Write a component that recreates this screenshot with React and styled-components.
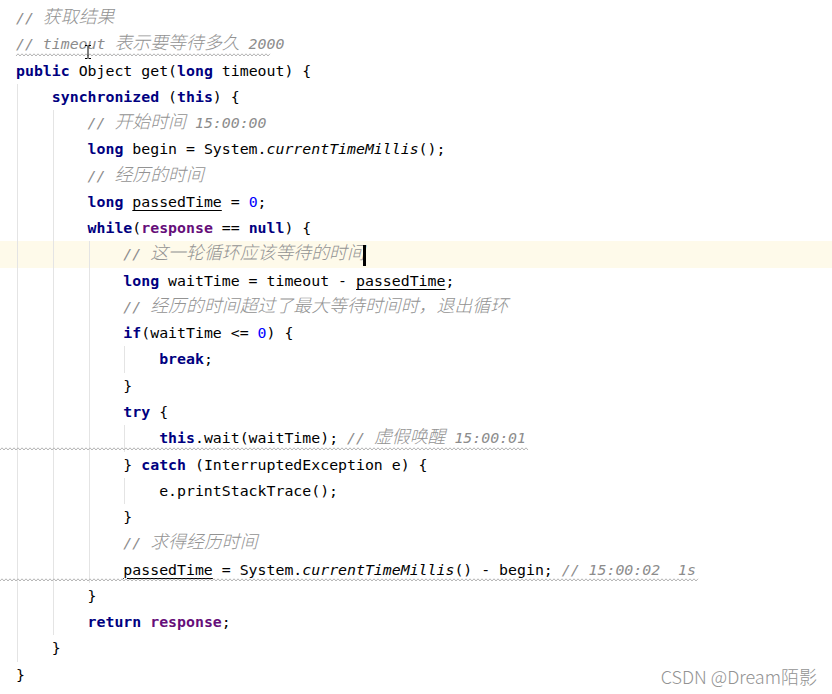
import React from "react";
import styled, { createGlobalStyle } from "styled-components";

const Global = createGlobalStyle`
  html, body { margin: 0; padding: 0; background: #ffffff; }
  #root { width: 832px; height: 694px; }
`;

const LINE_H = 26.28;
const GUIDE_X = [17, 53, 89, 124];

const Page = styled.div`
  position: relative;
  width: 832px;
  height: 694px;
  box-sizing: border-box;
  padding-top: 5px;
  overflow: hidden;
  background: #ffffff;
  font-family: "DejaVu Sans Mono", "Liberation Mono", monospace;
  font-size: 14.87px;
  color: #000000;
`;

const Editor = styled.div`
  display: flex;
  flex-direction: column;
`;

const Line = styled.div`
  position: relative;
  height: ${LINE_H}px;
  line-height: ${LINE_H}px;
  padding-left: 16px;
  white-space: pre;
  background-color: ${(p) => (p.$hl ? "#fefaea" : "transparent")};
  background-image: ${(p) =>
    p.$guides.length
      ? p.$guides.map(() => "linear-gradient(#e4e4e4, #e4e4e4)").join(", ")
      : "none"};
  background-repeat: no-repeat;
  background-size: 1px 100%;
  background-position: ${(p) =>
    p.$guides.length ? p.$guides.map((g) => `${GUIDE_X[g]}px 0`).join(", ") : "0 0"};
`;

const Token = styled.span`
  color: ${(p) =>
    ({ kw: "#000080", fld: "#660e7a", num: "#0000ff", cm: "#8c8c8c" }[p.$kind] || "#000000")};
  font-weight: ${(p) => (p.$kind === "kw" || p.$kind === "fld" ? 700 : 400)};
  font-style: ${(p) => (p.$kind === "cm" || p.$kind === "st" ? "italic" : "normal")};
  text-decoration: ${(p) => (p.$kind === "u" ? "underline" : "none")};
  text-underline-offset: 3px;
  text-decoration-thickness: 1px;
`;

const Cjk = styled.span`
  font-family: "Noto Sans CJK SC", sans-serif;
  font-size: 17.9px;
  font-weight: 300;
  line-height: 1;
  color: #939393;
`;

const Caret = styled.span`
  display: inline-block;
  width: 3px;
  height: 21px;
  margin-left: -2px;
  background: #000000;
  vertical-align: middle;
`;

const SquiggleSvg = styled.svg`
  position: absolute;
  bottom: 1px;
  height: 4px;
  overflow: visible;
`;

const Watermark = styled.div`
  position: absolute;
  right: 15px;
  bottom: 5px;
  font-family: "Noto Sans CJK SC", "Noto Sans", sans-serif;
  font-size: 18px;
  font-weight: 300;
  color: #939393;
`;

const MouseCursor = styled.svg`
  position: absolute;
  left: 84px;
  top: 45px;
`;

function Squiggle({ from, width }) {
  let d = "M0 3";
  for (let x = 2, up = true; x <= width; x += 2, up = !up) {
    d += ` L${x} ${up ? 0.8 : 3}`;
  }
  return (
    <SquiggleSvg style={{ left: from, width }} viewBox={`0 0 ${width} 4`}>
      <path d={d} fill="none" stroke="#b5b5b5" strokeWidth="1" />
    </SquiggleSvg>
  );
}

const CJK_RE = /([\u3000-\u303f\u4e00-\u9fff\uff00-\uffef]+)/;

function renderText(text) {
  return text.split(CJK_RE).map((part, i) =>
    i % 2 === 1 ? <Cjk key={i}>{part}</Cjk> : part
  );
}

const lines = [
  { i: 0, g: [], t: [["cm", "// 获取结果"]] },
  { i: 0, g: [], wavy: [16, 270], t: [["cm", "// timeout 表示要等待多久 2000"]] },
  { i: 0, g: [], t: [["kw", "public"], ["p", " Object get("], ["kw", "long"], ["p", " timeout) {"]] },
  { i: 1, g: [0], t: [["kw", "synchronized"], ["p", " ("], ["kw", "this"], ["p", ") {"]] },
  { i: 2, g: [0, 1], t: [["cm", "// 开始时间 15:00:00"]] },
  { i: 2, g: [0, 1], t: [["kw", "long"], ["p", " begin = System."], ["st", "currentTimeMillis"], ["p", "();"]] },
  { i: 2, g: [0, 1], t: [["cm", "// 经历的时间"]] },
  { i: 2, g: [0, 1], t: [["kw", "long"], ["p", " "], ["u", "passedTime"], ["p", " = "], ["num", "0"], ["p", ";"]] },
  { i: 2, g: [0, 1], t: [["kw", "while"], ["p", "("], ["fld", "response"], ["p", " == "], ["kw", "null"], ["p", ") {"]] },
  { i: 3, g: [0, 1, 2], hl: true, caret: true, t: [["cm", "// 这一轮循环应该等待的时间"]] },
  { i: 3, g: [0, 1, 2], t: [["kw", "long"], ["p", " waitTime = timeout - "], ["u", "passedTime"], ["p", ";"]] },
  { i: 3, g: [0, 1, 2], t: [["cm", "// 经历的时间超过了最大等待时间时，退出循环"]] },
  { i: 3, g: [0, 1, 2], t: [["kw", "if"], ["p", "(waitTime <= "], ["num", "0"], ["p", ") {"]] },
  { i: 4, g: [0, 1, 2, 3], t: [["kw", "break"], ["p", ";"]] },
  { i: 3, g: [0, 1, 2], t: [["p", "}"]] },
  { i: 3, g: [0, 1, 2], t: [["kw", "try"], ["p", " {"]] },
  { i: 4, g: [0, 1, 2, 3], wavy: [0, 528], t: [["kw", "this"], ["p", ".wait(waitTime); "], ["cm", "// 虚假唤醒 15:00:01"]] },
  { i: 3, g: [0, 1, 2], t: [["p", "} "], ["kw", "catch"], ["p", " (InterruptedException e) {"]] },
  { i: 4, g: [0, 1, 2, 3], t: [["p", "e.printStackTrace();"]] },
  { i: 3, g: [0, 1, 2], t: [["p", "}"]] },
  { i: 3, g: [0, 1, 2], t: [["cm", "// 求得经历时间"]] },
  { i: 3, g: [0, 1, 2], wavy: [0, 698], t: [["u", "passedTime"], ["p", " = System."], ["st", "currentTimeMillis"], ["p", "() - begin; "], ["cm", "// 15:00:02  1s"]] },
  { i: 2, g: [0, 1], t: [["p", "}"]] },
  { i: 2, g: [0, 1], t: [["kw", "return"], ["p", " "], ["fld", "response"], ["p", ";"]] },
  { i: 1, g: [0], t: [["p", "}"]] },
  { i: 0, g: [], t: [["p", "}"]] },
];

export default function App() {
  return (
    <>
      <Global />
      <Page>
        <Editor>
          {lines.map((ln, idx) => (
            <Line key={idx} $guides={ln.g} $hl={!!ln.hl}>
              {" ".repeat(ln.i * 4)}
              {ln.t.map(([kind, text], k) => (
                <Token key={k} $kind={kind}>
                  {renderText(text)}
                </Token>
              ))}
              {ln.caret && <Caret />}
              {ln.wavy && <Squiggle from={ln.wavy[0]} width={ln.wavy[1] - ln.wavy[0]} />}
            </Line>
          ))}
        </Editor>
        <MouseCursor width="8" height="14" viewBox="0 0 8 14">
          <path d="M1 0.5 H3.5 M4.5 0.5 H7 M4 1 V13 M1 13.5 H3.5 M4.5 13.5 H7" stroke="#000" strokeWidth="1" fill="none" />
        </MouseCursor>
        <Watermark>CSDN @Dream陌影</Watermark>
      </Page>
    </>
  );
}
